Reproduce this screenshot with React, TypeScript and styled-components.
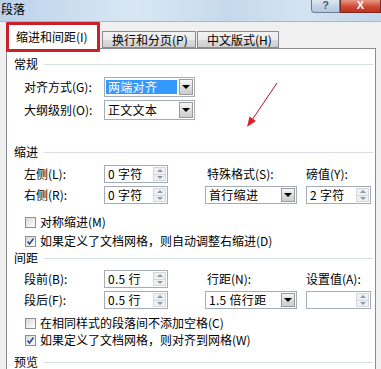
import styled, { createGlobalStyle } from 'styled-components'

const GlobalStyle = createGlobalStyle`
  html, body {
    margin: 0;
    padding: 0;
  }
  body {
    width: 381px;
    height: 369px;
    overflow: hidden;
    background: #f0f0f0;
    color: #000;
    font-family: "Noto Sans CJK SC", "Liberation Sans", sans-serif;
    font-size: 12px;
  }
`

const Window = styled.div`
  position: relative;
  width: 381px;
  height: 369px;
  overflow: hidden;
  background: #f0f0f0;
`

const TitleBar = styled.div`
  height: 21px;
  display: flex;
  align-items: flex-start;
  background: linear-gradient(90deg, #bcd2e9 0%, #d9e7f4 35%, #c6d9ec 60%, #d4e3f2 80%, #c3d6ea 100%);
  border-bottom: 1px solid #aab8c6;
`

const Title = styled.span`
  font-size: 12px;
  line-height: 14px;
  padding: 2px 0 0 1px;
`

const Caption = styled.div`
  margin-left: auto;
  display: flex;
`

const CaptionButton = styled.div<{ $close?: boolean }>`
  width: ${p => (p.$close ? 41 : 29)}px;
  height: 13px;
  box-sizing: border-box;
  border: 1px solid ${p => (p.$close ? '#7a2a20' : '#6c7d92')};
  border-top: none;
  border-radius: ${p => (p.$close ? '0' : '0 0 0 4px')};
  background: ${p =>
    p.$close
      ? 'linear-gradient(#e79a88, #cc4b35 55%, #c2301c)'
      : 'linear-gradient(#dde8f4, #c2d3e6 55%, #b3c7de)'};
  color: ${p => (p.$close ? '#fff' : '#4d5e74')};
  font: bold 11px/11px "Liberation Sans", sans-serif;
  text-align: center;
`

const TabRow = styled.div`
  height: 26px;
  display: flex;
  align-items: flex-end;
  padding-left: 8px;
`

const Tab = styled.div<{ $active?: boolean; $w: number; $ml: number }>`
  position: relative;
  box-sizing: border-box;
  width: ${p => p.$w}px;
  height: ${p => (p.$active ? 25 : 17)}px;
  margin-bottom: ${p => (p.$active ? -1 : 0)}px;
  margin-left: ${p => p.$ml}px;
  padding: ${p => (p.$active ? '5px 0 0 7px' : '1px 0 0 9px')};
  border: 1px solid #898c95;
  border-bottom: ${p => (p.$active ? 'none' : '1px solid #898c95')};
  background: ${p => (p.$active ? '#fff' : 'linear-gradient(#f2f2f2, #ebebeb 50%, #dddddd 51%, #cfcfcf)')};
  line-height: 14px;
  white-space: nowrap;
  z-index: ${p => (p.$active ? 2 : 1)};

  ${p =>
    p.$active &&
    `
    &::after {
      content: '';
      position: absolute;
      left: -3px;
      top: -3px;
      right: -3px;
      bottom: -3px;
      border: 3px solid #c8212c;
      border-radius: 1px;
    }
  `}
`

const Panel = styled.div`
  margin-left: 6px;
  width: 370px;
  height: 340px;
  box-sizing: border-box;
  background: #fff;
  border: 1px solid #898c95;
  padding: 8px 2px 0 7px;
`

const Heading = styled.div<{ $mt?: number }>`
  display: flex;
  align-items: center;
  gap: 6px;
  height: 14px;
  line-height: 14px;
  margin-top: ${p => p.$mt ?? 0}px;

  &::after {
    content: '';
    flex: 1;
    height: 1px;
    background: #d5dfe5;
  }
`

const Grid = styled.div<{ $mt: number; $row: number; $gap: number }>`
  display: grid;
  grid-template-columns: 80px 64px 37px 92px 9px 65px;
  grid-auto-rows: ${p => p.$row}px;
  row-gap: ${p => p.$gap}px;
  margin-top: ${p => p.$mt}px;
  padding-left: 10px;
  align-items: center;
`

const Label = styled.span<{ $indent?: number }>`
  line-height: 14px;
  white-space: nowrap;
  padding-left: ${p => p.$indent ?? 0}px;
`

const Cell = styled.div`
  grid-column: 2 / -1;
  height: 100%;
`

const Field = styled.div<{ $w: number }>`
  width: ${p => p.$w}px;
  height: 100%;
  box-sizing: border-box;
  border: 1px solid #a5acb5;
  background: #fff;
  display: flex;
  align-items: center;
  line-height: 14px;
  white-space: nowrap;
`

const FieldText = styled.span<{ $selected?: boolean }>`
  flex: 1;
  align-self: stretch;
  margin: 2px 1px 2px 1px;
  padding-left: 2px;
  display: flex;
  align-items: center;
  background: ${p => (p.$selected ? '#3399ff' : 'transparent')};
  color: ${p => (p.$selected ? '#fff' : '#000')};
  letter-spacing: 0.3px;
`

const DropButton = styled.div`
  width: 14px;
  align-self: stretch;
  margin: 1px;
  box-sizing: border-box;
  border: 1px solid #9a9a9a;
  background: linear-gradient(#f7f7f7, #dedede 50%, #cdcdcd);
  display: flex;
  align-items: center;
  justify-content: center;

  &::before {
    content: '';
    border-left: 4px solid transparent;
    border-right: 4px solid transparent;
    border-top: 4px solid #000;
  }
`

const SpinButtons = styled.div`
  width: 13px;
  align-self: stretch;
  margin: 1px 1px 1px 0;
  display: flex;
  flex-direction: column;
  background: #eef0f2;
  border: 1px solid #d4d8dc;
  box-sizing: border-box;
`

const SpinHalf = styled.div<{ $down?: boolean }>`
  flex: 1;
  display: flex;
  align-items: center;
  justify-content: center;
  border-top: ${p => (p.$down ? '1px solid #d4d8dc' : 'none')};

  &::before {
    content: '';
    border-left: 3px solid transparent;
    border-right: 3px solid transparent;
    ${p => (p.$down ? 'border-top: 3px solid #8b9aa8;' : 'border-bottom: 3px solid #8b9aa8;')}
  }
`

const CheckList = styled.div<{ $mt: number; $gap: number }>`
  display: flex;
  flex-direction: column;
  gap: ${p => p.$gap}px;
  margin-top: ${p => p.$mt}px;
  padding-left: 11px;
`

const CheckRow = styled.label`
  display: flex;
  align-items: center;
  gap: 4px;
  height: 16px;
  line-height: 14px;
  white-space: nowrap;
`

const Box = styled.span`
  width: 11px;
  height: 11px;
  box-sizing: border-box;
  border: 1px solid #8f8f8f;
  background: linear-gradient(135deg, #d8d8d8, #f4f4f4 70%, #fff);
  display: flex;
  align-items: center;
  justify-content: center;
`

const Arrow = styled.svg`
  position: absolute;
  left: 0;
  top: 0;
  pointer-events: none;
`

function Select({ w, value, selected }: { w: number; value: string; selected?: boolean }) {
  return (
    <Field $w={w}>
      <FieldText $selected={selected}>{value}</FieldText>
      <DropButton />
    </Field>
  )
}

function Spin({ w, value }: { w: number; value: string }) {
  return (
    <Field $w={w}>
      <FieldText>{value}</FieldText>
      <SpinButtons>
        <SpinHalf />
        <SpinHalf $down />
      </SpinButtons>
    </Field>
  )
}

function Check({ checked, children }: { checked?: boolean; children: string }) {
  return (
    <CheckRow>
      <Box>
        {checked && (
          <svg width="9" height="9" viewBox="0 0 9 9">
            <path d="M1.5 4.5 L3.5 7 L7.5 1.5" fill="none" stroke="#2b4c8c" strokeWidth="1.6" />
          </svg>
        )}
      </Box>
      {children}
    </CheckRow>
  )
}

export default function App() {
  return (
    <>
      <GlobalStyle />
      <Window>
        <TitleBar>
          <Title>段落</Title>
          <Caption>
            <CaptionButton>?</CaptionButton>
            <CaptionButton $close>X</CaptionButton>
          </Caption>
        </TitleBar>

        <TabRow>
          <Tab $active $w={90} $ml={0}>缩进和间距(I)</Tab>
          <Tab $w={94} $ml={4}>换行和分页(P)</Tab>
          <Tab $w={82} $ml={1}>中文版式(H)</Tab>
        </TabRow>

        <Panel>
          <Heading>常规</Heading>
          <Grid $mt={6} $row={20} $gap={3}>
            <Label>对齐方式(G):</Label>
            <Cell>
              <Select w={91} value="两端对齐" selected />
            </Cell>
            <Label>大纲级别(O):</Label>
            <Cell>
              <Select w={91} value="正文文本" />
            </Cell>
          </Grid>

          <Heading $mt={25}>缩进</Heading>
          <Grid $mt={6} $row={18} $gap={3}>
            <Label>左侧(L):</Label>
            <Spin w={64} value="0 字符" />
            <span />
            <Label $indent={2}>特殊格式(S):</Label>
            <span />
            <Label>磅值(Y):</Label>
            <Label>右侧(R):</Label>
            <Spin w={64} value="0 字符" />
            <span />
            <Select w={92} value="首行缩进" />
            <span />
            <Spin w={65} value="2 字符" />
          </Grid>

          <CheckList $mt={10} $gap={3}>
            <Check>对称缩进(M)</Check>
            <Check checked>如果定义了文档网格，则自动调整右缩进(D)</Check>
          </CheckList>

          <Heading $mt={2}>间距</Heading>
          <Grid $mt={5} $row={18} $gap={3}>
            <Label>段前(B):</Label>
            <Spin w={64} value="0.5 行" />
            <span />
            <Label $indent={2}>行距(N):</Label>
            <span />
            <Label>设置值(A):</Label>
            <Label>段后(F):</Label>
            <Spin w={64} value="0.5 行" />
            <span />
            <Select w={92} value="1.5 倍行距" />
            <span />
            <Spin w={65} value="" />
          </Grid>

          <CheckList $mt={6} $gap={1}>
            <Check>在相同样式的段落间不添加空格(C)</Check>
            <Check checked>如果定义了文档网格，则对齐到网格(W)</Check>
          </CheckList>

          <Heading $mt={7}>预览</Heading>
        </Panel>

        <Arrow width="381" height="369" viewBox="0 0 381 369">
          <line x1="277" y1="83" x2="252" y2="120" stroke="#b0142a" strokeWidth="1" />
          <polygon points="247,127 256,121 249.5,116.5" fill="#e0202c" />
        </Arrow>
      </Window>
    </>
  )
}
